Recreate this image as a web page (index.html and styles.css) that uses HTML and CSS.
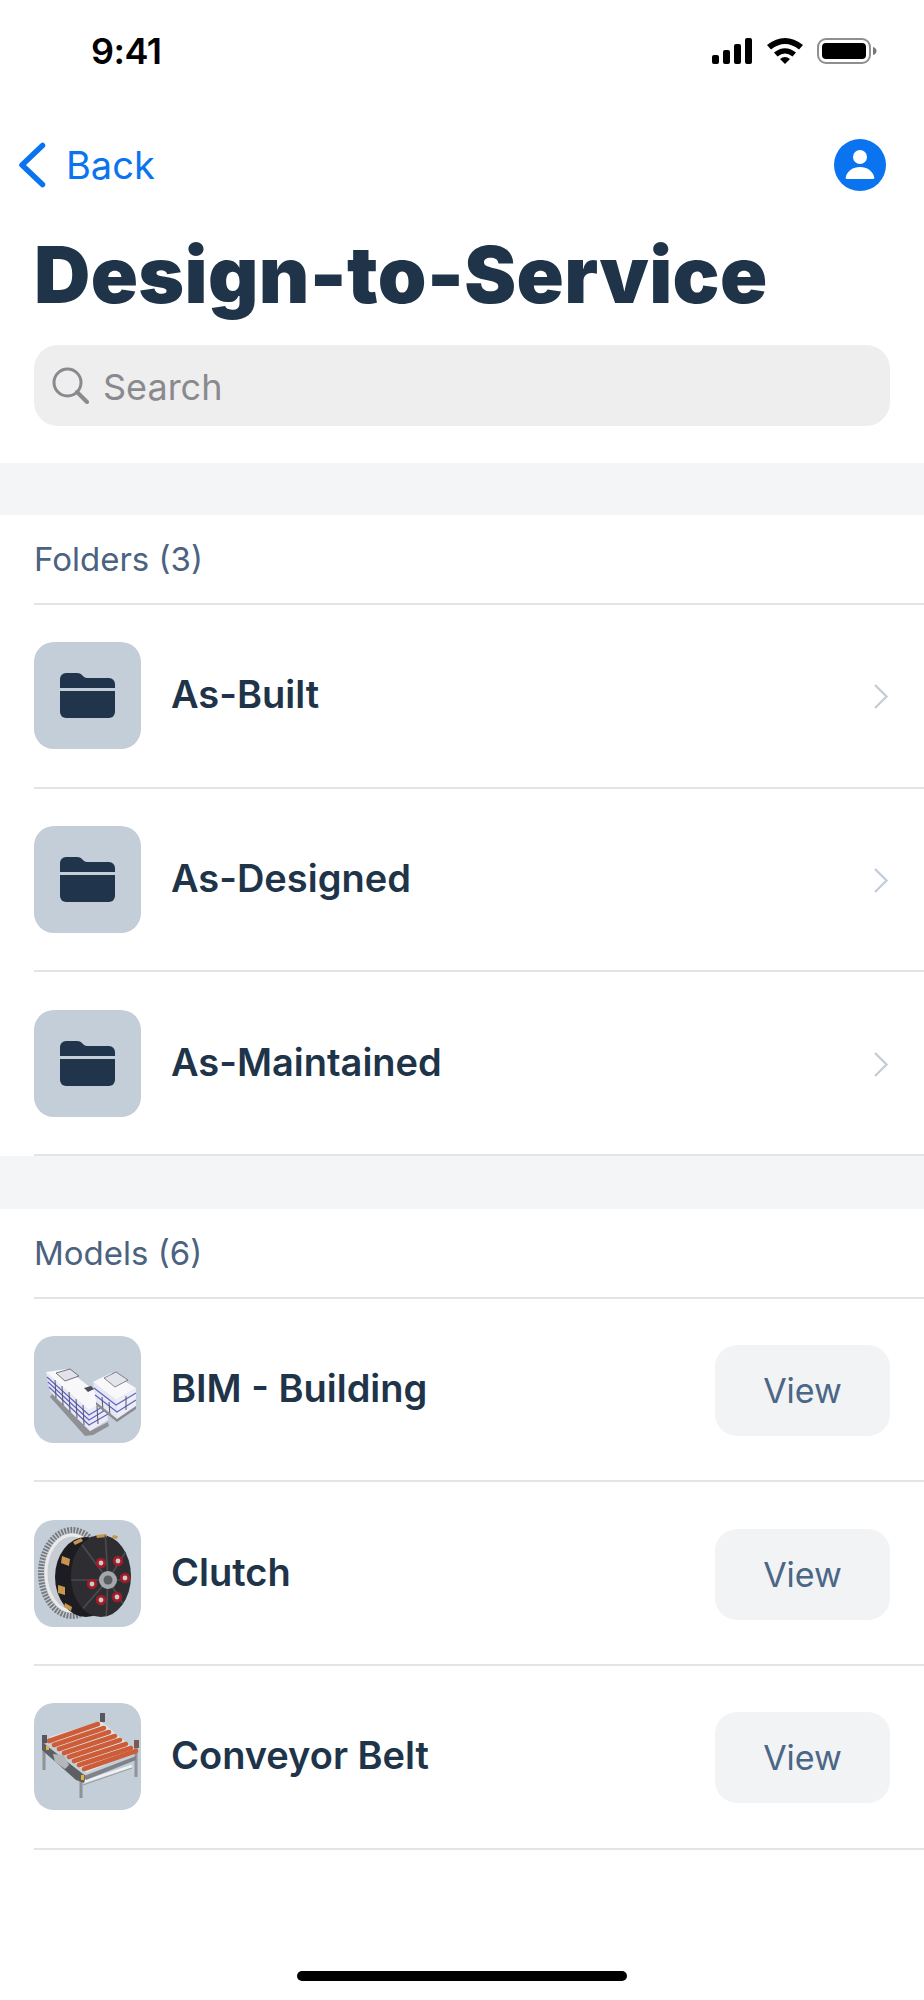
FILE: index.html
```html
<!DOCTYPE html>
<html lang="en">
<head>
<meta charset="utf-8">
<title>Design-to-Service</title>
<link rel="stylesheet" href="styles.css">
</head>
<body>
<svg class="defs" width="0" height="0" aria-hidden="true">
  <symbol id="folder" viewBox="0 0 55 45">
    <path d="M0 6a6 6 0 0 1 6-6h11c3 0 4 1 6 3s3 2 6 2h20a6 6 0 0 1 6 6v4H0z"/>
    <path d="M0 18h55v21a6 6 0 0 1-6 6H6a6 6 0 0 1-6-6z"/>
  </symbol>
  <symbol id="chev" viewBox="0 0 16 27">
    <path d="M2 2l11.5 11.5L2 25" fill="none" stroke="#c3ced9" stroke-width="2.4"/>
  </symbol>
  <filter id="soft"><feGaussianBlur stdDeviation="0.4"/></filter>
  <clipPath id="face"><ellipse cx="67" cy="56" rx="30" ry="41"/></clipPath>
</svg>

<div class="screen">
  <header class="status">
    <span class="clock">9:41</span>
    <div class="status-icons">
      <svg class="sig" viewBox="0 0 41 26"><rect x="0" y="17" width="7" height="9" rx="2"/><rect x="11" y="12" width="7" height="14" rx="2"/><rect x="22" y="6" width="7" height="20" rx="2"/><rect x="33" y="0" width="7" height="26" rx="2"/></svg>
      <svg class="wifi" viewBox="0 0 36 26"><path d="M0 7Q18-7 36 7L32 11.500Q18 .5 4 11.500z"/><path d="M7 14.500Q18 6 29 14.500L25.500 18.500Q18 12.500 10.500 18.500z"/><path d="M13 21Q18 17 23 21L18 26z"/></svg>
      <svg class="batt" viewBox="0 0 60 26"><rect x="1" y="1" width="52" height="24" rx="8" fill="none" stroke="#8f8f8f" stroke-width="2"/><rect x="5" y="5" width="44" height="16" rx="4"/><path d="M56 9c2 .6 3.500 2 3.500 4s-1.500 3.400-3.500 4z" fill="#777"/></svg>
    </div>
  </header>

  <nav class="nav">
    <a class="back">
      <svg class="back-chev" viewBox="0 0 28 46"><path d="M24.500 3.500L4 23l20.500 19.500" fill="none" stroke="#0a74f0" stroke-width="5.500" stroke-linecap="round" stroke-linejoin="round"/></svg>
      <span>Back</span>
    </a>
    <svg class="avatar" viewBox="0 0 52 52"><circle cx="26" cy="26" r="26" fill="#0a74f0"/><circle cx="26" cy="18" r="7" fill="#fff"/><path d="M13 40c-1.200 0-1.500-1-1.200-2 1.500-6 7-10 14.200-10s12.700 4 14.200 10c.3 1 0 2-1.200 2z" fill="#fff"/></svg>
  </nav>

  <h1 class="title">Design-to-Service</h1>

  <div class="search">
    <svg class="search-ico" viewBox="0 0 37 37"><circle cx="15.500" cy="15.500" r="13.500" fill="none" stroke="#8a8a8e" stroke-width="3"/><path d="M25 25l10 10" stroke="#8a8a8e" stroke-width="4" stroke-linecap="round"/></svg>
    <span class="search-text">Search</span>
  </div>

  <div class="band band-first"></div>

  <section>
    <h2 class="group-head">Folders (3)</h2>
    <div class="row">
      <div class="tile"><svg class="folder"><use href="#folder"/></svg></div>
      <span class="name">As-Built</span>
      <svg class="chev"><use href="#chev"/></svg>
    </div>
    <div class="row">
      <div class="tile"><svg class="folder"><use href="#folder"/></svg></div>
      <span class="name">As-Designed</span>
      <svg class="chev"><use href="#chev"/></svg>
    </div>
    <div class="row">
      <div class="tile"><svg class="folder"><use href="#folder"/></svg></div>
      <span class="name">As-Maintained</span>
      <svg class="chev"><use href="#chev"/></svg>
    </div>
  </section>

  <div class="band"></div>

  <section>
    <h2 class="group-head">Models (6)</h2>
    <div class="row">
      <div class="tile">
        <svg class="model" viewBox="0 0 107 107"><g filter="url(#soft)">
          <path d="M18 58l38 37 6-3 12-6 1 4-16 9-8 1-35-39z" fill="#8f9094"/>
          <path d="M12 36l43 38 1 21-40-40z" fill="#e9e9f3"/>
          <path d="M55 74l17-10 2 20-18 11z" fill="#ececf6"/>
          <path d="M12 36l21-3 39 31-17 10z" fill="#f8f8fb"/>
          <g stroke="#5f63c4" stroke-width="1.200" fill="none">
            <path d="M13 41l42 38 18-11"/><path d="M14 46l41 38 18-11"/><path d="M15 51l40 38 19-11"/>
          </g>
          <g stroke="#55575e" stroke-width="1" fill="none">
            <path d="M21 44l1 18M28 50l1 19M35 56l1 20M42 63l1 19M49 69l1 20M63 70l1 18"/>
          </g>
          <path d="M22 37l14-4 9 7-14 5z" fill="#e2e3ea" stroke="#55575e" stroke-width=".8"/>
          <path d="M50 52l7-2 3 3-6 3z" fill="#4c4f5c"/>
          <path d="M59 46l18-9 25 15-20 12z" fill="#f8f8fb"/>
          <path d="M59 46l23 18 1 19-21-17z" fill="#e7e7f3"/>
          <path d="M82 64l20-12 0 18-19 13z" fill="#ededf6"/>
          <g stroke="#5f63c4" stroke-width="1.200" fill="none">
            <path d="M60 52l22 17 20-12"/><path d="M61 59l22 17 19-12"/>
          </g>
          <path d="M68 61l1 14M75 66l1 14M92 60v14" stroke="#55575e" stroke-width="1"/>
          <path d="M70 42l12-6 12 8-13 7z" fill="#e4e4ec" stroke="#6a6a70" stroke-width=".8"/>
          <path d="M62 66l21 17 19-13 0 3-19 13-21-17z" fill="#8a8b92"/>
        </g></svg>
      </div>
      <span class="name">BIM - Building</span>
      <button class="view">View</button>
    </div>
    <div class="row">
      <div class="tile">
        <svg class="model" viewBox="0 0 107 107"><g filter="url(#soft)">
          <ellipse cx="38" cy="53" rx="31" ry="43" fill="#c8ced4" stroke="#77797c" stroke-width="6" stroke-dasharray="1.800 1.300"/>
          <ellipse cx="38" cy="53" rx="26" ry="38" fill="#c6ccd2" stroke="#e9eaeb" stroke-width="3"/>
          <ellipse cx="52" cy="57" rx="31" ry="40" fill="#1f1f21"/>
          <path d="M39 22l8-4 2 3-8 4zM28 36l8 3-1 7-8-3zM24 65l7 2 0 8-7-2zM31 83l7 4-1 4-7-4z" fill="#c89550"/>
          <ellipse cx="67" cy="56" rx="30" ry="41" fill="#2f2f31"/>
          <path d="M62 15l10-1 1 3-10 1zM79 15l5 1-1 3-5-1z" fill="#c89550"/>
          <g clip-path="url(#face)">
            <g stroke="#4a4b4f" stroke-width="1.600" fill="none">
              <path d="M74 60L71 10M74 60L98 22M74 60l30 0M74 60l24 38M74 60L72 102M74 60L44 94M74 60L36 60M74 60L46 22"/>
            </g>
          </g>
          <circle cx="74" cy="60" r="9" fill="#a4a7ab"/>
          <circle cx="74" cy="60" r="4.500" fill="#5c5e62"/>
          <g fill="#c9cbcf" stroke="#a11d28" stroke-width="2.800"><circle cx="67" cy="43" r="3.800"/><circle cx="84" cy="41" r="3.800"/><circle cx="91" cy="58" r="3.800"/><circle cx="83" cy="77" r="3.800"/><circle cx="67" cy="80" r="3.800"/><circle cx="58" cy="64" r="3.800"/></g>
        </g></svg>
      </div>
      <span class="name">Clutch</span>
      <button class="view">View</button>
    </div>
    <div class="row">
      <div class="tile">
        <svg class="model" viewBox="0 0 107 107"><g filter="url(#soft)">
          <g stroke="#8f9296" stroke-width="3" fill="none">
            <path d="M10 40v27M47 71v24M68 12v14M102 40v34"/>
          </g>
          <path d="M49 79l49-16" stroke="#f0f1f2" stroke-width="2.500"/>
          <path d="M49 82l49-17" stroke="#8c8f92" stroke-width=".8"/>
          <path d="M8 39l41 32 3 2-2 7-8-3L8 47z" fill="#5d6064"/>
          <path d="M19 51l11 1 5 10-4 4-10-7z" fill="#b4b7ba"/>
          <path d="M50 73l52-20 0 4-50 20z" fill="#7f8286"/>
          <path d="M15 34l52-16 35 30-50 22z" fill="#e2e4e6"/>
          <g stroke="#cc5d37" stroke-width="4.600" stroke-linecap="round">
            <path d="M15 38l49-17"/><path d="M20 42l50-17"/><path d="M25 46l50-17"/><path d="M30 50l51-17"/><path d="M35 54l51-17"/><path d="M40 58l52-17"/><path d="M45 62l52-17"/><path d="M50 66l52-18"/>
          </g>
          <g fill="#e3b23c"><rect x="12" y="43" width="3" height="4"/><rect x="47" y="72" width="3" height="5"/></g>
          <rect x="8" y="32" width="5" height="8" fill="#55585c"/>
          <rect x="66" y="10" width="5" height="9" fill="#55585c"/>
          <rect x="100" y="37" width="5" height="8" fill="#7a5a55"/>
        </g></svg>
      </div>
      <span class="name">Conveyor Belt</span>
      <button class="view">View</button>
    </div>
  </section>

  <div class="home"></div>
</div>
</body>
</html>
```

FILE: styles.css
```css
* { box-sizing: border-box; }
html, body { margin: 0; padding: 0; background: #fff; }
body { font-family: "Inter", "Liberation Sans", sans-serif; color: #203449; }
.defs { position: absolute; }
.screen { width: 924px; height: 2000px; overflow: hidden; background: #fff; }

.status { height: 98px; display: flex; align-items: center; justify-content: space-between; padding: 4px 47px 0 91px; }
.clock { font-size: 36px; font-weight: 600; color: #000; letter-spacing: -.5px; }
.status-icons { display: flex; align-items: center; gap: 14px; }
.sig { width: 41px; height: 26px; }
.wifi { width: 36px; height: 26px; }
.batt { width: 60px; height: 26px; }

.nav { height: 134px; display: flex; align-items: center; justify-content: space-between; padding: 0 38px 0 18px; }
.back { display: flex; align-items: center; gap: 20px; color: #0a74f0; font-size: 38px; }
.back-chev { width: 28px; height: 46px; }
.avatar { width: 52px; height: 52px; }

.title { margin: 0 0 29px; padding: 2px 34px 0; font-size: 78px; line-height: 82px; font-weight: 900; letter-spacing: .33px; color: #203449; }

.search { margin: 0 34px; height: 81px; border-radius: 24px; background: #eeeeef; display: flex; align-items: center; gap: 14px; padding: 0 18px; color: #8a8a8e; font-size: 36px; }
.search-ico { width: 37px; height: 37px; }
.search-text { padding-top: 2px; }

.band { height: 52.5px; background: #f4f5f7; }
.band-first { margin-top: 36.5px; }

.group-head { margin: 0 0 0 34px; height: 90px; display: flex; align-items: center; border-bottom: 2px solid #e2e4e7; font-size: 33px; font-weight: 400; color: #4b6280; }

.row { margin-left: 34px; height: 183.7px; display: flex; align-items: center; gap: 30px; border-bottom: 2px solid #e2e4e7; padding-right: 34px; }
.tile { width: 107px; height: 107px; flex: none; border-radius: 20px; background: #c3ced9; display: flex; align-items: center; justify-content: center; }
.folder { width: 55px; height: 45px; fill: #20344b; }
.model { width: 107px; height: 107px; display: block; }
.name { flex: 1; padding-bottom: 3px; font-size: 38px; font-weight: 600; color: #203449; }
.chev { width: 16px; height: 27px; margin: 2px 1px 0 0; }
.view { width: 175px; height: 91px; flex: none; margin-top: 2px; border: 0; border-radius: 22px; background: #f1f3f5; color: #4b6785; font: 400 34px "Inter", "Liberation Sans", sans-serif; }

.home { width: 330px; height: 10px; margin: 121px auto 0; border-radius: 5px; background: #000; }
```
